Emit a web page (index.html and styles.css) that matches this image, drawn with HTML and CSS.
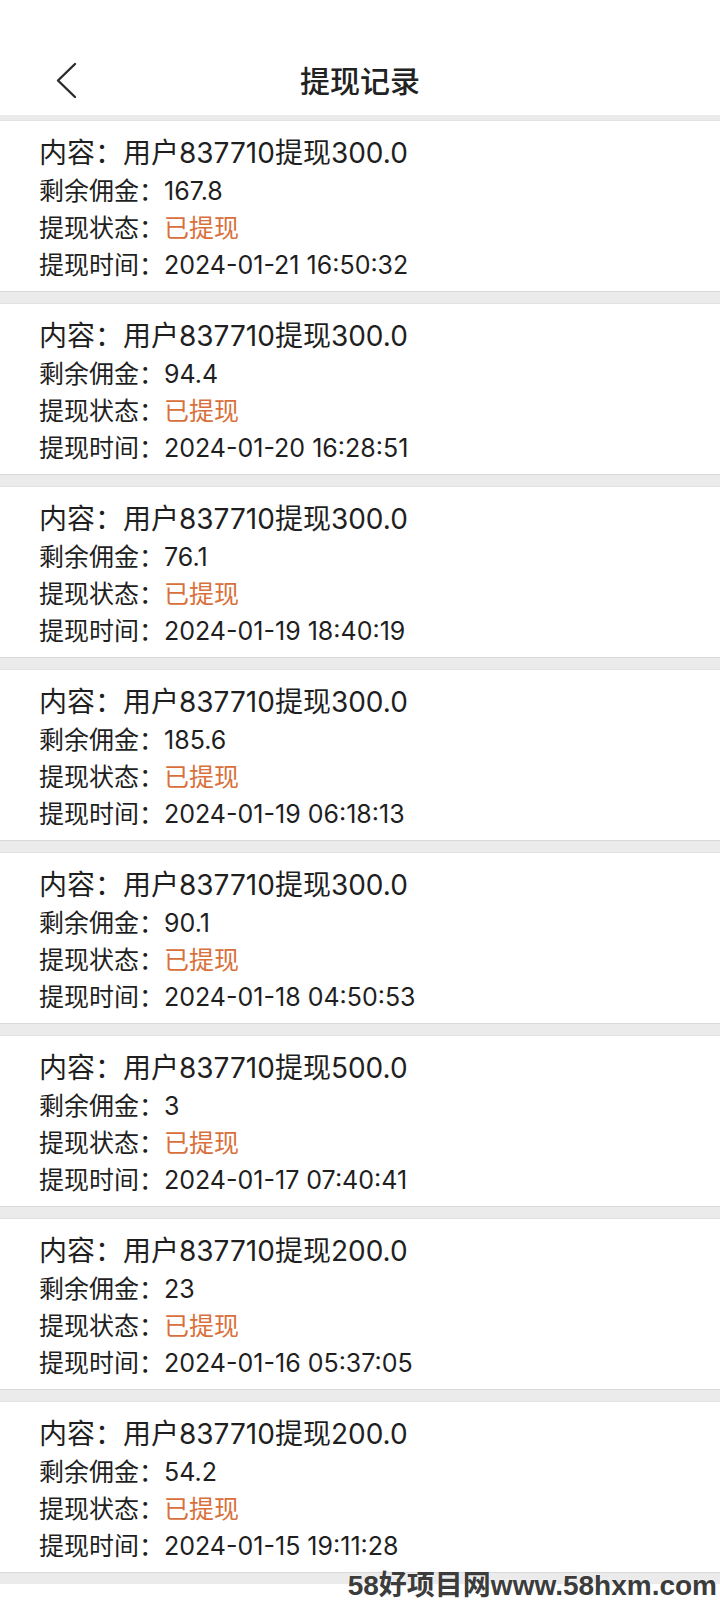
FILE: index.html
```html
<!DOCTYPE html>
<html lang="zh-CN">
<head>
  <meta charset="UTF-8">
  <meta name="viewport" content="width=device-width, initial-scale=1.0">
  <title>提现记录</title>
  <link rel="stylesheet" href="styles.css">
</head>
<body>
  <header class="topbar">
    <a class="back" href="#" aria-label="返回">
      <svg width="22" height="38" viewBox="0 0 22 38">
        <polyline points="19,2 2,18.5 19,35" fill="none" stroke="#2b2b2b" stroke-width="2.4" stroke-linecap="round" stroke-linejoin="round"/>
      </svg>
    </a>
    <h1 class="title">提现记录</h1>
    <span></span>
  </header>

  <main class="list">
    <div class="card">
      <p class="content">内容：用户837710提现300.0</p>
      <p class="row">剩余佣金：167.8</p>
      <p class="row">提现状态：<span class="status">已提现</span></p>
      <p class="row">提现时间：2024-01-21 16:50:32</p>
    </div>
    <div class="card">
      <p class="content">内容：用户837710提现300.0</p>
      <p class="row">剩余佣金：94.4</p>
      <p class="row">提现状态：<span class="status">已提现</span></p>
      <p class="row">提现时间：2024-01-20 16:28:51</p>
    </div>
    <div class="card">
      <p class="content">内容：用户837710提现300.0</p>
      <p class="row">剩余佣金：76.1</p>
      <p class="row">提现状态：<span class="status">已提现</span></p>
      <p class="row">提现时间：2024-01-19 18:40:19</p>
    </div>
    <div class="card">
      <p class="content">内容：用户837710提现300.0</p>
      <p class="row">剩余佣金：185.6</p>
      <p class="row">提现状态：<span class="status">已提现</span></p>
      <p class="row">提现时间：2024-01-19 06:18:13</p>
    </div>
    <div class="card">
      <p class="content">内容：用户837710提现300.0</p>
      <p class="row">剩余佣金：90.1</p>
      <p class="row">提现状态：<span class="status">已提现</span></p>
      <p class="row">提现时间：2024-01-18 04:50:53</p>
    </div>
    <div class="card">
      <p class="content">内容：用户837710提现500.0</p>
      <p class="row">剩余佣金：3</p>
      <p class="row">提现状态：<span class="status">已提现</span></p>
      <p class="row">提现时间：2024-01-17 07:40:41</p>
    </div>
    <div class="card">
      <p class="content">内容：用户837710提现200.0</p>
      <p class="row">剩余佣金：23</p>
      <p class="row">提现状态：<span class="status">已提现</span></p>
      <p class="row">提现时间：2024-01-16 05:37:05</p>
    </div>
    <div class="card">
      <p class="content">内容：用户837710提现200.0</p>
      <p class="row">剩余佣金：54.2</p>
      <p class="row">提现状态：<span class="status">已提现</span></p>
      <p class="row">提现时间：2024-01-15 19:11:28</p>
    </div>
  </main>

  <div class="watermark">58好项目网www.58hxm.com</div>
</body>
</html>
```

FILE: styles.css
```css
body {
  margin: 0;
  padding: 0;
  background-color: #fff;
  color: #1f1f1f;
  font-family: Inter, "Noto Sans CJK SC", sans-serif;
}
p {
  margin: 0;
}
.topbar {
  display: grid;
  grid-template-columns: 1fr auto 1fr;
  align-items: center;
  height: 115px;
  padding-top: 47px;
  box-sizing: border-box;
  background-color: #fff;
}
.back {
  display: flex;
  padding-left: 56px;
}
.title {
  margin: 0;
  font-size: 30px;
  font-weight: 500;
  line-height: 40px;
  color: #222;
}
.list {
  display: flex;
  flex-direction: column;
  gap: 11px;
  padding: 5px 0 11px;
  background-color: #ebebeb;
}
.card {
  padding: 12px 20px 7px 39px;
  background-color: #fff;
  border-top: 1px solid #e2e2e2;
  border-bottom: 1px solid #d9d9d9;
}
.content {
  font-size: 28px;
  line-height: 40px;
}
.row {
  font-size: 25px;
  line-height: 37px;
}
.status {
  color: #d9703c;
}
.watermark {
  position: absolute;
  right: 3px;
  top: 1570px;
  font-family: "Liberation Sans", "Noto Sans CJK SC", sans-serif;
  font-size: 28px;
  font-weight: bold;
  line-height: 32px;
  color: #3c3c3c;
  text-shadow: 0 0 2px #fff;
}
```
